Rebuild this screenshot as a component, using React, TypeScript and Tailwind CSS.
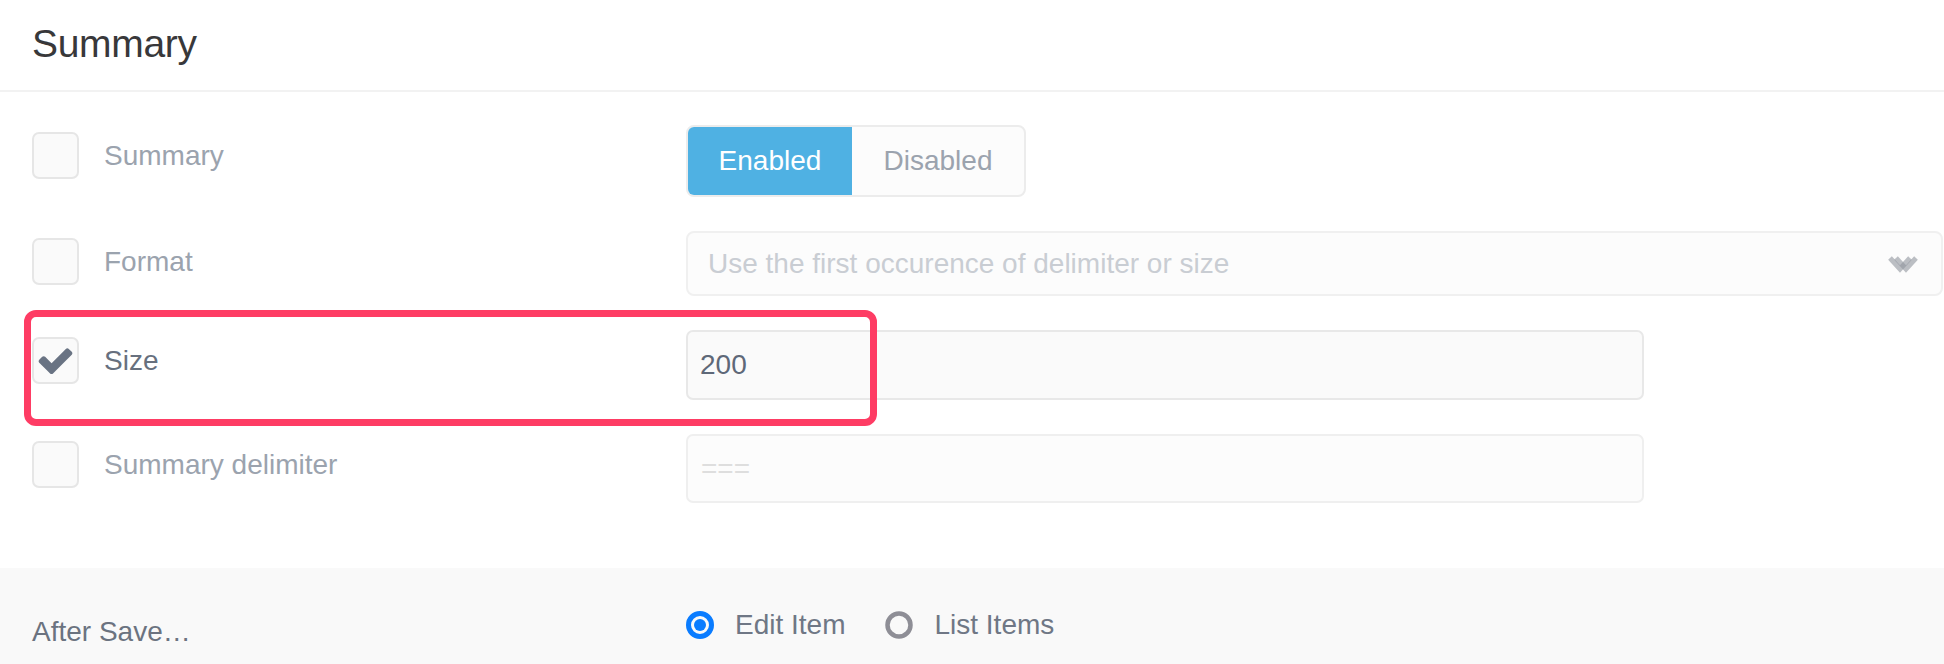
import React from "react";

const Checkbox = ({ checked }: { checked?: boolean }) => (
  <div className="flex h-[47px] w-[47px] shrink-0 items-center justify-center rounded-[7px] border-2 border-[#e6e6e6] bg-[#fafafa]">
    {checked && (
      <svg viewBox="0 0 1792 1792" className="h-[39px] w-[39px]" fill="#697383">
        <path d="M1671 566q0 40-28 68l-724 724-136 136q-28 28-68 28t-68-28l-136-136-362-362q-28-28-28-68t28-68l136-136q28-28 68-28t68 28l294 295 656-657q28-28 68-28t68 28l136 136q28 28 28 68z" />
      </svg>
    )}
  </div>
);

const FieldRow = ({
  label,
  checked,
  children,
}: {
  label: string;
  checked?: boolean;
  children: React.ReactNode;
}) => (
  <div className="flex items-start">
    <div className="flex w-[686px] shrink-0 items-center gap-[25px] pl-[32px] pt-[7px]">
      <Checkbox checked={checked} />
      <span className={checked ? "text-[#67707e]" : "text-[#9ba3ae]"}>{label}</span>
    </div>
    {children}
  </div>
);

const Radio = ({ on }: { on?: boolean }) => (
  <svg viewBox="0 0 28 28" className="h-[28px] w-[28px]">
    <circle
      cx="14"
      cy="14"
      r="11.5"
      fill="none"
      stroke={on ? "#0a7cff" : "#8e8e96"}
      strokeWidth={on ? 5 : 4.5}
    />
    {on && <circle cx="14" cy="14" r="6" fill="#0a7cff" />}
  </svg>
);

export default function App() {
  return (
    <div className="relative min-h-[664px] w-full bg-white font-['Liberation_Sans',Helvetica,Arial,sans-serif] text-[28px] leading-[32px]">
      <div className="h-[92px] border-b-2 border-[#f2f2f2] pl-[32px] pt-[22px]">
        <h1 className="text-[39px] leading-[44px] tracking-[-0.3px] text-[#38383a]">Summary</h1>
      </div>

      <div className="flex flex-col gap-[34px] pt-[33px]">
        <FieldRow label="Summary">
          <div className="flex h-[72px] w-[340px] overflow-hidden rounded-[8px] border-2 border-[#ececec] bg-[#fcfcfc]">
            <div className="flex w-[164px] items-center justify-center bg-[#4fb1e3] text-white">Enabled</div>
            <div className="flex flex-1 items-center justify-center text-[#9ba3ae]">Disabled</div>
          </div>
        </FieldRow>

        <FieldRow label="Format">
          <div className="flex h-[65px] w-[1257px] items-center justify-between rounded-[8px] border-2 border-[#f0f0f0] bg-[#fcfcfc] pl-[20px] pr-[22px]">
            <span className="text-[#c9cdd3]">Use the first occurence of delimiter or size</span>
            <svg viewBox="0 0 32 18" className="h-[18px] w-[32px]">
              <polyline points="3,3 13,14 23,3" fill="none" stroke="#8f959c" strokeOpacity="0.6" strokeWidth="5" />
              <polyline points="9,3 19,14 29,3" fill="none" stroke="#8f959c" strokeOpacity="0.6" strokeWidth="5" />
            </svg>
          </div>
        </FieldRow>

        <FieldRow label="Size" checked>
          <div className="flex h-[70px] w-[958px] items-center rounded-[7px] border-2 border-[#e8e8e8] bg-[#fafafa] pl-[12px] text-[#5e6878]">
            200
          </div>
        </FieldRow>

        <FieldRow label="Summary delimiter">
          <div className="flex h-[69px] w-[958px] items-center rounded-[7px] border-2 border-[#efefef] bg-[#fcfcfc] pl-[13px] text-[#dedede]">
            ===
          </div>
        </FieldRow>
      </div>

      <div className="mt-[65px] flex h-[96px] bg-[#f9f9f9]">
        <div className="w-[686px] shrink-0 pl-[32px] pt-[48px] text-[#6b7380]">After Save…</div>
        <div className="flex items-center self-start pt-[41px] text-[#6f7785]">
          <Radio on />
          <span className="ml-[21px]">Edit Item</span>
          <span className="ml-[40px] flex">
            <Radio />
          </span>
          <span className="ml-[21px]">List Items</span>
        </div>
      </div>

      <div className="pointer-events-none absolute left-[24px] top-[310px] h-[116px] w-[853px] rounded-[12px] border-[7px] border-[#fe3c64]" />
    </div>
  );
}
